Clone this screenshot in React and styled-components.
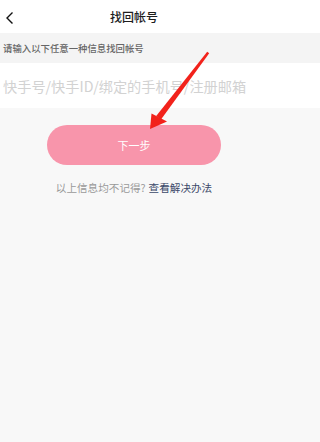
import React from "react";
import styled, { createGlobalStyle } from "styled-components";

const Global = createGlobalStyle`
  html, body { margin: 0; padding: 0; overflow: hidden; background: #f8f8f8; }
  body { font-family: "Noto Sans CJK SC", "Noto Sans", sans-serif; }
`;

const Page = styled.div`
  position: relative;
  width: 100%;
  min-width: 268px;
  min-height: 442px;
  background: #f8f8f8;
`;

const Header = styled.div`
  height: 33px;
  background: #fff;
`;

const HeaderBar = styled.div`
  width: 268px;
  height: 100%;
  display: flex;
  align-items: center;
  justify-content: center;
  position: relative;
`;

const Back = styled.button`
  position: absolute;
  left: 3px;
  top: 10px;
  border: 0;
  background: none;
  padding: 0;
  width: 14px;
  height: 16px;
  display: flex;
`;

const Title = styled.div`
  font-size: 12px;
  font-weight: 500;
  color: #1e1e1e;
  margin-top: -1px;
`;

const Hint = styled.div`
  height: 30px;
  background: #f4f4f4;
  display: flex;
  align-items: center;
  padding-left: 3px;
  font-size: 9.4px;
  font-weight: 500;
  color: #666;
`;

const InputRow = styled.div`
  height: 45px;
  background: #fff;
  display: flex;
  align-items: center;
`;

const Input = styled.input`
  border: 0;
  outline: none;
  background: transparent;
  width: 100%;
  padding: 0 0 0 3px;
  font-family: inherit;
  font-size: 14.2px;
  color: #333;
  &::placeholder { color: #d2d2d2; }
`;

const Body = styled.div`
  width: 268px;
  display: flex;
  flex-direction: column;
  align-items: center;
  padding-top: 17px;
`;

const NextButton = styled.button`
  width: 174px;
  height: 40px;
  border: 0;
  border-radius: 20px;
  background: #f895ab;
  color: #fff;
  font-family: inherit;
  font-size: 11px;
  display: flex;
  align-items: center;
  justify-content: center;
  padding: 0;
`;

const Help = styled.div`
  margin-top: 16px;
  font-size: 10.6px;
  color: #9a9a9a;
  line-height: 14px;
`;

const HelpLink = styled.span`
  color: #3c4a6a;
  margin-left: 3px;
`;

const Arrow = styled.svg`
  position: absolute;
  left: 0;
  top: 0;
  pointer-events: none;
`;

export default function App() {
  return (
    <>
      <Global />
      <Page>
        <Header>
          <HeaderBar>
            <Back aria-label="back">
              <svg width="14" height="16" viewBox="0 0 14 16">
                <path d="M9.5 2.5 L4 8 L9.5 13.5" fill="none" stroke="#111" strokeWidth="1.4" />
              </svg>
            </Back>
            <Title>找回帐号</Title>
          </HeaderBar>
        </Header>
        <Hint>请输入以下任意一种信息找回帐号</Hint>
        <InputRow>
          <Input placeholder="快手号/快手ID/绑定的手机号/注册邮箱" />
        </InputRow>
        <Body>
          <NextButton>下一步</NextButton>
          <Help>
            以上信息均不记得?<HelpLink>查看解决办法</HelpLink>
          </Help>
        </Body>
        <Arrow width="268" height="442" viewBox="0 0 268 442">
          <polygon points="207.2,51.8 209.2,53.2 161,119.5 156.2,116" fill="#f2221b" />
          <polygon points="150,129 151.5,113.5 167,121.5" fill="#f2221b" />
        </Arrow>
      </Page>
    </>
  );
}
